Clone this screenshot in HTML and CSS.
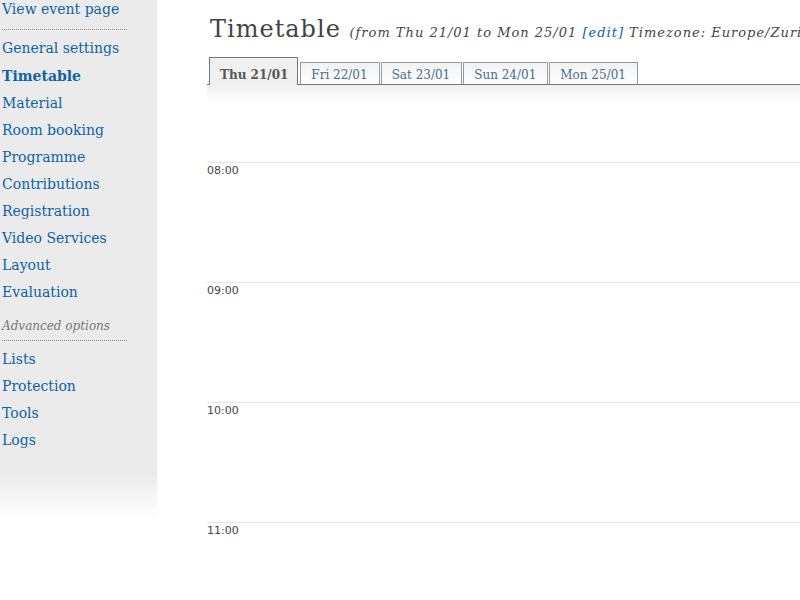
FILE: index.html
```html
<!DOCTYPE html>
<html lang="en">
<head>
<meta charset="utf-8">
<title>Timetable</title>
<link rel="stylesheet" href="styles.css">
</head>
<body>
<div class="layout">
  <nav class="sidebar">
    <div class="menu">
      <ul class="menu-list menu-top">
        <li><a href="#">View event page</a></li>
      </ul>
      <ul class="menu-list">
        <li><a href="#">General settings</a></li>
        <li class="current"><a href="#">Timetable</a></li>
        <li><a href="#">Material</a></li>
        <li><a href="#">Room booking</a></li>
        <li><a href="#">Programme</a></li>
        <li><a href="#">Contributions</a></li>
        <li><a href="#">Registration</a></li>
        <li><a href="#">Video Services</a></li>
        <li><a href="#">Layout</a></li>
        <li><a href="#">Evaluation</a></li>
      </ul>
      <h2 class="menu-heading">Advanced options</h2>
      <ul class="menu-list">
        <li><a href="#">Lists</a></li>
        <li><a href="#">Protection</a></li>
        <li><a href="#">Tools</a></li>
        <li><a href="#">Logs</a></li>
      </ul>
    </div>
    <div class="sidebar-fade"></div>
  </nav>
  <main class="content">
    <h1 class="title">Timetable <span class="subtitle">(from Thu 21/01 to Mon 25/01 <a href="#">[edit]</a> Timezone: Europe/Zurich)</span></h1>
    <ul class="tabs">
      <li class="selected"><a href="#">Thu 21/01</a></li>
      <li><a href="#">Fri 22/01</a></li>
      <li><a href="#">Sat 23/01</a></li>
      <li><a href="#">Sun 24/01</a></li>
      <li><a href="#">Mon 25/01</a></li>
    </ul>
    <div class="timetable">
      <div class="hour">08:00</div>
      <div class="hour">09:00</div>
      <div class="hour">10:00</div>
      <div class="hour">11:00</div>
    </div>
  </main>
</div>
</body>
</html>
```
FILE: styles.css
```css
* { box-sizing: border-box; }

body {
  margin: 0;
  background: #fff;
  color: #444;
  font-family: "DejaVu Serif", serif;
}

a { color: #0b63a5; text-decoration: none; }
ul { list-style: none; margin: 0; padding: 0; }

.layout { display: flex; align-items: flex-start; }

.sidebar { flex: 0 0 157px; }

.menu {
  padding: 1px 30px 20px 2px;
  background: #ebebeb;
  font-size: 14px;
}

.menu-list li { line-height: 17px; padding: 5px 0; }
.menu-list .current { line-height: 18px; font-weight: bold; }

.menu-top {
  border-bottom: 1px dotted #888;
  margin-bottom: 5px;
  padding-bottom: 6px;
}
.menu-top li { padding-top: 0; }

.menu-heading {
  margin: 10px 0 5px;
  padding: 3px 0 6px;
  border-bottom: 1px dotted #888;
  color: #777;
  font-size: 12px;
  font-style: italic;
  font-weight: normal;
  line-height: 15px;
}

.sidebar-fade {
  height: 44px;
  background: linear-gradient(#ebebeb, #fff);
}

.content { flex: 1; min-width: 0; padding: 15px 0 0 50px; overflow: hidden; }

.title {
  margin: 0 3px 10px;
  font-size: 24px;
  font-weight: normal;
  letter-spacing: 1px;
  line-height: 29px;
  white-space: nowrap;
}

.subtitle { font-size: 13px; font-style: italic; }

.tabs {
  display: flex;
  align-items: flex-end;
  gap: 1px;
  padding-left: 2px;
  border-bottom: 1px solid #777;
  font-size: 12px;
  line-height: 14px;
}

.tabs li {
  border: 1px solid #999;
  border-bottom: 0;
  background: linear-gradient(#f0f2f4, #fff);
}
.tabs a { display: block; padding: 5px 11px 2px 10px; color: #4a6b8a; }

.tabs .selected {
  margin: 0 1px -1px 0;
  border-color: #777;
  background: #f0f0f0;
  font-weight: bold;
}
.tabs .selected a { padding: 10px 9px 3px 10px; color: #555; }

.timetable {
  padding-top: 77px;
  background: linear-gradient(#f0f0f0, #fff 18px);
}

.hour {
  height: 120px;
  border-top: 1px solid #e5e5e5;
  font-family: "DejaVu Sans", sans-serif;
  font-size: 11px;
  line-height: 15px;
}
.hour:last-child { height: 60px; }
```
